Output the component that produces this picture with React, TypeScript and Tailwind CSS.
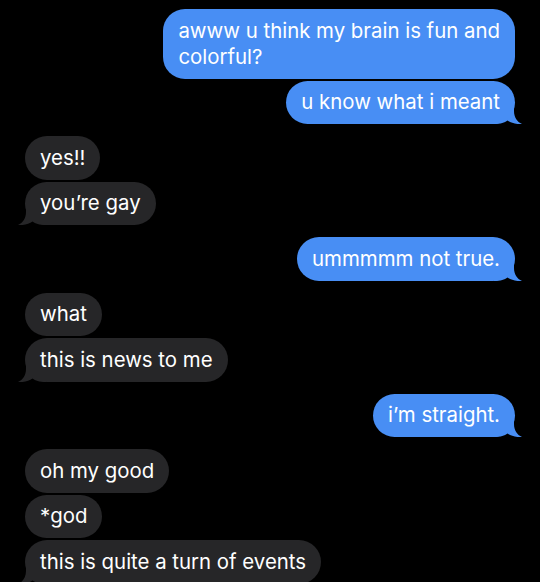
type Msg = { text: string; tail?: boolean }
type Group = { from: 'me' | 'them'; msgs: Msg[] }

const GROUPS: Group[] = [
  {
    from: 'me',
    msgs: [{ text: 'awww u think my brain is fun and\ncolorful?' }, { text: 'u know what i meant', tail: true }],
  },
  { from: 'them', msgs: [{ text: 'yes!!' }, { text: 'you’re gay', tail: true }] },
  { from: 'me', msgs: [{ text: 'ummmmm not true.', tail: true }] },
  { from: 'them', msgs: [{ text: 'what' }, { text: 'this is news to me', tail: true }] },
  { from: 'me', msgs: [{ text: 'i’m straight.', tail: true }] },
  {
    from: 'them',
    msgs: [{ text: 'oh my good' }, { text: '*god' }, { text: 'this is quite a turn of events', tail: true }],
  },
]

function Tail({ mine }: { mine: boolean }) {
  return (
    <svg
      viewBox="0 0 28 22"
      className={
        mine
          ? 'absolute bottom-0 right-[-7px] h-[22px] w-[28px] fill-[#488ef4]'
          : 'absolute bottom-0 left-[-7px] h-[22px] w-[28px] -scale-x-100 fill-[#262628]'
      }
    >
      <path d="M0 0 H20 V9 C20 15 23 20 28 22 C22 22.5 17 21 13.5 18.5 C10.5 20.5 7 22 0 22 Z" />
    </svg>
  )
}

function Bubble({ msg, mine }: { msg: Msg; mine: boolean }) {
  return (
    <div
      className={`relative max-w-[364px] whitespace-pre-line rounded-[22px] px-[15px] py-[8.75px] text-[20.4px] leading-[26px] text-white ${
        mine ? 'bg-[#488ef4]' : 'bg-[#262628]'
      }`}
    >
      {msg.tail && <Tail mine={mine} />}
      <span className="relative">{msg.text}</span>
    </div>
  )
}

export default function App() {
  return (
    <div
      className="flex h-[582px] w-[540px] flex-col gap-[12px] overflow-hidden bg-black px-[25px] pt-[9px]"
      style={{ fontFamily: 'Inter, "Liberation Sans", sans-serif' }}
    >
      {GROUPS.map((g, i) => (
        <div key={i} className={`flex flex-col gap-[2px] ${g.from === 'me' ? 'items-end' : 'items-start'}`}>
          {g.msgs.map((m, j) => (
            <Bubble key={j} msg={m} mine={g.from === 'me'} />
          ))}
        </div>
      ))}
    </div>
  )
}
